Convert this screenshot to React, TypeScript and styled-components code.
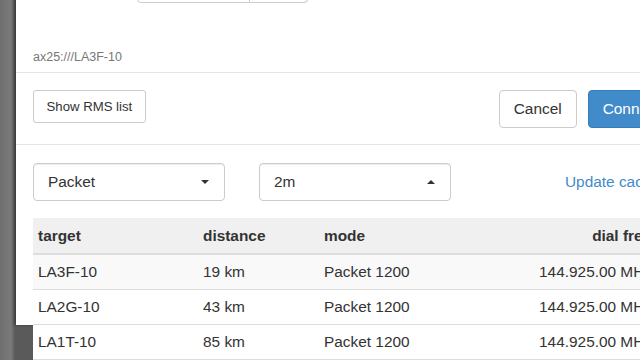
import styled, { createGlobalStyle } from 'styled-components';

const GlobalStyle = createGlobalStyle`
  html, body {
    margin: 0;
    padding: 0;
    background: #777777;
    overflow: hidden;
  }
  body {
    font-family: "Liberation Sans", Arial, sans-serif;
    color: #333333;
  }
`;

const Backdrop = styled.div`
  width: 640px;
  height: 360px;
  overflow: hidden;
  background: linear-gradient(to right, #6f6f6f 0px, #7a7a7a 11px, #5a5a5a 15px);
`;

const Dialog = styled.div`
  margin-left: 16px;
  width: 676px;
  height: 360px;
  background: #ffffff;
  box-shadow: -2px 0 3px rgba(0, 0, 0, 0.35);
`;

const Body = styled.div`
  padding: 0 17px 6px;
`;

const InputGroup = styled.div`
  display: flex;
  margin: -35px 0 0 104px;
  width: 171px;
  height: 38px;
`;

const GroupInput = styled.div`
  flex: 1;
  border: 1px solid #cccccc;
  border-radius: 4px 0 0 4px;
  box-shadow: inset 0 1px 1px rgba(0, 0, 0, 0.075);
`;

const GroupAddon = styled.div`
  width: 57px;
  border: 1px solid #cccccc;
  border-left: none;
  border-radius: 0 4px 4px 0;
  background: #ffffff;
`;

const UrlText = styled.div`
  margin-top: 45px;
  font-size: 12.5px;
  line-height: 18px;
  color: #777777;
`;

const Footer = styled.div`
  display: flex;
  align-items: flex-start;
  border-top: 1px solid #e5e5e5;
  padding: 17px 17px 16px;
`;

const Spacer = styled.div`
  flex: 1;
`;

const Button = styled.button<{ $primary?: boolean; $small?: boolean }>`
  font-family: "Liberation Sans", Arial, sans-serif;
  font-size: ${(p) => (p.$small ? '13.2px' : '15.4px')};
  height: ${(p) => (p.$small ? '33px' : '38px')};
  padding: ${(p) => (p.$small ? '0 12.5px' : '0 14px')};
  border-radius: ${(p) => (p.$small ? '3px' : '4px')};
  border: 1px solid ${(p) => (p.$primary ? '#357ebd' : '#cccccc')};
  background: ${(p) => (p.$primary ? '#428bca' : '#ffffff')};
  color: ${(p) => (p.$primary ? '#ffffff' : '#333333')};
  margin-left: ${(p) => (p.$primary ? '11px' : '0')};
  white-space: nowrap;
`;

const Section = styled.div`
  border-top: 1px solid #e5e5e5;
  padding: 18px 17px 0;
`;

const Controls = styled.div`
  display: flex;
  align-items: center;
  margin-bottom: 17px;
`;

const Select = styled.div`
  display: flex;
  align-items: center;
  justify-content: space-between;
  box-sizing: border-box;
  width: 192px;
  height: 38px;
  margin-right: 34px;
  padding: 0 15px 0 14px;
  border: 1px solid #cccccc;
  border-radius: 4px;
  box-shadow: inset 0 1px 1px rgba(0, 0, 0, 0.075);
  font-size: 15.4px;
  color: #333333;
`;

const Caret = styled.span<{ $up?: boolean }>`
  width: 0;
  height: 0;
  border-left: 4.5px solid transparent;
  border-right: 4.5px solid transparent;
  border-top: ${(p) => (p.$up ? 'none' : '4.5px solid #333333')};
  border-bottom: ${(p) => (p.$up ? '4.5px solid #333333' : 'none')};
`;

const Link = styled.a`
  margin-left: 80px;
  font-size: 15.4px;
  color: #428bca;
  text-decoration: none;
  white-space: nowrap;
`;

const Table = styled.table`
  width: 624px;
  border-collapse: collapse;
  font-size: 15.4px;
`;

const Th = styled.th<{ $w?: number; $right?: boolean }>`
  width: ${(p) => (p.$w ? `${p.$w}px` : 'auto')};
  height: 35px;
  padding: 0 5px;
  background: #f0f0f0;
  border-bottom: 2px solid #dddddd;
  text-align: ${(p) => (p.$right ? 'right' : 'left')};
  font-weight: bold;
  white-space: nowrap;
`;

const Tr = styled.tr<{ $striped?: boolean }>`
  background: ${(p) => (p.$striped ? '#f9f9f9' : '#ffffff')};
`;

const Td = styled.td<{ $right?: boolean }>`
  height: 34px;
  padding: 0 5px;
  border-bottom: 1px solid #dddddd;
  text-align: ${(p) => (p.$right ? 'right' : 'left')};
  white-space: nowrap;
`;

const rows = [
  { target: 'LA3F-10', distance: '19 km', mode: 'Packet 1200', freq: '144.925.00 MHz' },
  { target: 'LA2G-10', distance: '43 km', mode: 'Packet 1200', freq: '144.925.00 MHz' },
  { target: 'LA1T-10', distance: '85 km', mode: 'Packet 1200', freq: '144.925.00 MHz' },
];

export default function App(): JSX.Element {
  return (
    <>
      <GlobalStyle />
      <Backdrop>
        <Dialog>
          <Body>
            <InputGroup>
              <GroupInput />
              <GroupAddon />
            </InputGroup>
            <UrlText>ax25:///LA3F-10</UrlText>
          </Body>
          <Footer>
            <Button $small>Show RMS list</Button>
            <Spacer />
            <Button>Cancel</Button>
            <Button $primary>Connect</Button>
          </Footer>
          <Section>
            <Controls>
              <Select>
                Packet
                <Caret />
              </Select>
              <Select>
                2m
                <Caret $up />
              </Select>
              <Link href="#">Update cache</Link>
            </Controls>
            <Table>
              <thead>
                <tr>
                  <Th $w={155}>target</Th>
                  <Th $w={111}>distance</Th>
                  <Th>mode</Th>
                  <Th $right>dial freq</Th>
                </tr>
              </thead>
              <tbody>
                {rows.map((r, i) => (
                  <Tr key={r.target} $striped={i === 0}>
                    <Td>{r.target}</Td>
                    <Td>{r.distance}</Td>
                    <Td>{r.mode}</Td>
                    <Td $right>{r.freq}</Td>
                  </Tr>
                ))}
              </tbody>
            </Table>
          </Section>
        </Dialog>
      </Backdrop>
    </>
  );
}
